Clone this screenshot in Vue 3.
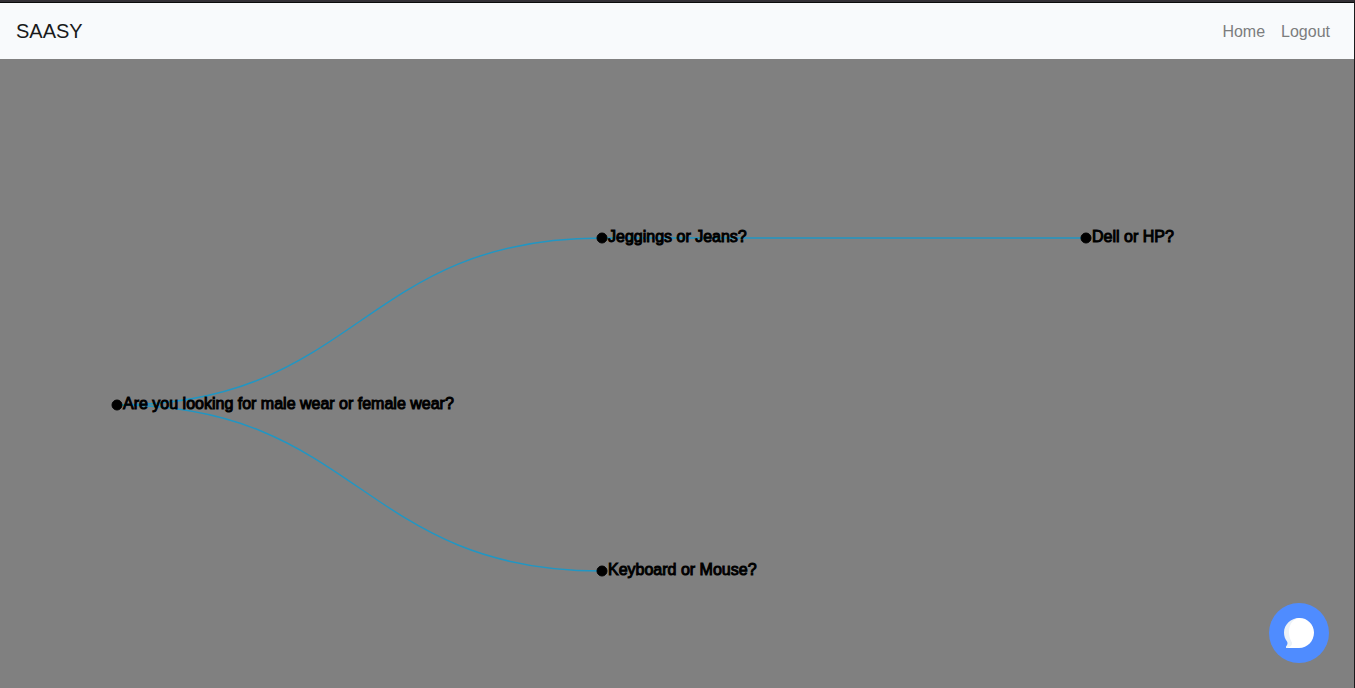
<script setup>
const nodes = [
  { id: 'wear', x: 117, y: 346, label: 'Are you looking for male wear or female wear?' },
  { id: 'jeans', x: 602, y: 179, label: 'Jeggings or Jeans?' },
  { id: 'keyboard', x: 602, y: 512, label: 'Keyboard or Mouse?' },
  { id: 'dell', x: 1086, y: 179, label: 'Dell or HP?' },
]
const links = [
  [nodes[0], nodes[1]],
  [nodes[0], nodes[2]],
  [nodes[1], nodes[3]],
]
function curve([a, b]) {
  const mid = (a.x + b.x) / 2
  return `M${a.x},${a.y}C${mid},${a.y} ${mid},${b.y} ${b.x},${b.y}`
}
</script>

<template>
  <div class="page">
    <nav class="navbar">
      <a class="brand" href="#">SAASY</a>
      <div class="menu">
        <a href="#">Home</a>
        <a href="#">Logout</a>
      </div>
    </nav>
    <main class="board">
      <svg class="tree" viewBox="0 0 1354 629" preserveAspectRatio="xMinYMin meet">
        <path v-for="(l, i) in links" :key="i" class="link" :d="curve(l)" />
        <g v-for="n in nodes" :key="n.id" class="node" :transform="`translate(${n.x},${n.y})`">
          <circle r="5" />
          <text x="6" y="4">{{ n.label }}</text>
        </g>
      </svg>
    </main>
    <button class="chat" type="button" aria-label="Open chat">
      <svg width="32" height="32" viewBox="0 0 32 32" aria-hidden="true">
        <path fill="#edf2f7" d="M16 1C8 1 1 7.500 1 15.500C1 19 2 22 4 24.500C5 26 4.500 28 3 29.500V31H16Z" />
        <path fill="#fff" d="M16 1C23.500 .5 31 7 31 15.500C31 24 24.500 31 16 31H4C7.500 30 9.500 28 9 25.500C7.500 22.500 6 20 6 15C6 8 9.500 2 16 1Z" />
      </svg>
    </button>
  </div>
</template>

<style>
body {
  margin: 0;
  background: #808080;
}
</style>

<style scoped>
.page {
  box-sizing: border-box;
  min-height: 100vh;
  display: flex;
  flex-direction: column;
  border-top: 2px solid #333036;
  border-right: 1px solid #1b1b1d;
  background: #808080;
  font-family: "Liberation Sans", Arial, sans-serif;
  font-size: 16px;
  line-height: 24px;
}
.navbar {
  display: flex;
  align-items: center;
  justify-content: space-between;
  padding: 8px 16px;
  border-top: 1px solid #0c0c0d;
  background: #f8fafc;
}
.navbar a {
  text-decoration: none;
}
.brand {
  padding: 5px 0;
  font-size: 20px;
  line-height: 30px;
  color: #1a1a1b;
}
.menu {
  display: flex;
}
.menu a {
  padding: 9px 8px 7px;
  color: #7c7d7e;
}
.board {
  flex: 1;
}
.tree {
  display: block;
  width: 100%;
}
.link {
  fill: none;
  stroke: #2196c3;
  stroke-width: 1.5px;
}
.node {
  fill: #000;
  stroke: #000;
  stroke-width: 1px;
}
.chat {
  position: fixed;
  right: 26px;
  bottom: 25px;
  display: flex;
  align-items: center;
  justify-content: center;
  width: 60px;
  height: 60px;
  padding: 0;
  border: 0;
  border-radius: 50%;
  background: #4f8cff;
  cursor: pointer;
}
</style>
